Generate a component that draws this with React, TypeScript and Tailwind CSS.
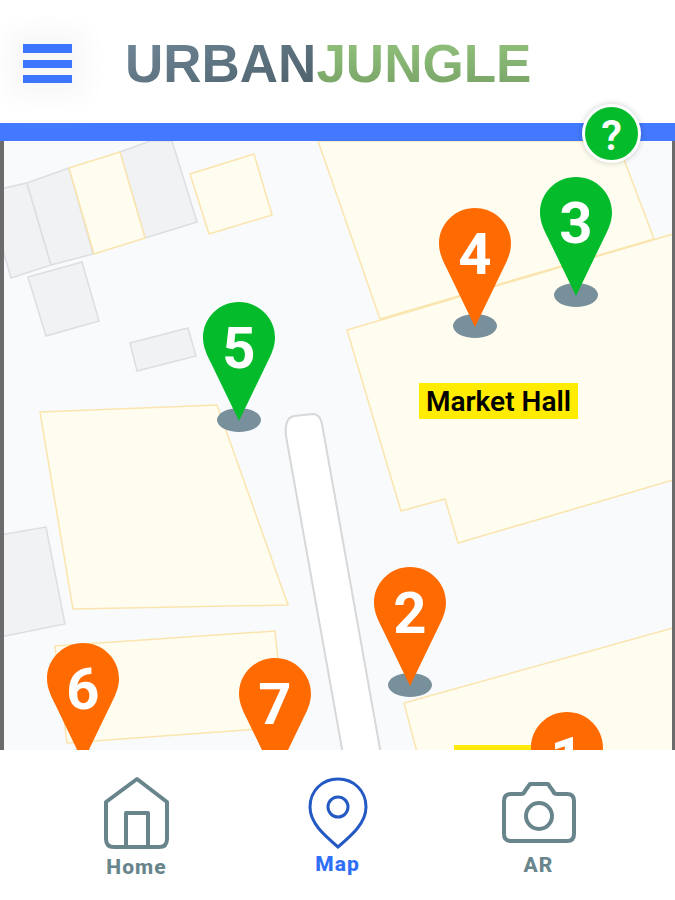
import type { ReactNode } from "react";

type Tone = "green" | "orange";

const pins: { id: number; x: number; y: number; tone: Tone }[] = [
  { id: 3, x: 572, y: 36, tone: "green" },
  { id: 4, x: 471, y: 67, tone: "orange" },
  { id: 5, x: 235, y: 161, tone: "green" },
  { id: 2, x: 406, y: 426, tone: "orange" },
  { id: 6, x: 79, y: 502, tone: "orange" },
  { id: 7, x: 271, y: 517, tone: "orange" },
  { id: 1, x: 563, y: 571, tone: "orange" },
];

function Pin({ id, x, y, tone }: { id: number; x: number; y: number; tone: Tone }) {
  return (
    <button
      type="button"
      aria-label={`Location ${id}`}
      className="absolute h-[132px] w-[72px] -translate-x-1/2 cursor-pointer"
      style={{ left: x, top: y }}
    >
      <svg className="absolute inset-0" width="72" height="132" viewBox="0 0 72 132" aria-hidden="true">
        <ellipse cx="36" cy="118" rx="22" ry="12" fill="#78909c" />
        <path
          d="M36 0C56 0 72 16 72 35.500C72 45 68 53 64 61L36 119L8 61C4 53 0 45 0 35.500C0 16 16 0 36 0Z"
          fill={tone === "green" ? "#04bb2c" : "#ff6b00"}
        />
      </svg>
      <span className="absolute inset-x-0 top-4 text-center text-[58px] leading-[60px] font-bold text-white">{id}</span>
    </button>
  );
}

function MapDrawing() {
  return (
    <svg className="absolute inset-0 h-full w-full" aria-hidden="true">
      <g transform="translate(-4 -141)" strokeWidth="1.5">
        <g fill="#f1f2f4" stroke="#dcdee2">
          <path d="M0 189L27 183L51 265L11 278L0 240Z" />
          <path d="M27 183L69 168L93 254L51 265Z" />
          <path d="M120 152L150 141L172 141L197 222L145 238Z" />
          <path d="M28 277L82 262L99 321L46 336Z" />
          <path d="M130 343L188 328L196 356L137 371Z" />
          <path d="M0 535L46 527L65 624L0 637Z" />
        </g>
        <g fill="#fffcf0" stroke="#fbe5ae">
          <path d="M69 168L120 152L145 238L94 254Z" />
          <path d="M190 174L254 154L272 215L209 234Z" />
          <path d="M318 141L380 319L654 239L617 141Z" />
          <path d="M347 330L680 232L680 478L458 543L445 499L401 511Z" />
          <path d="M40 412L217 405L288 605L73 609Z" />
          <path d="M55 646L275 631L285 727L67 743Z" />
          <path d="M404 703L680 626L680 760L419 760Z" />
        </g>
        <path
          d="M344 760L286 436Q284 418 294 416L313 414Q320 414 322 424L382 760"
          fill="#fff"
          stroke="#d6d8da"
          strokeWidth="2"
        />
      </g>
    </svg>
  );
}

function NavItem({ label, active, children }: { label: string; active?: boolean; children: ReactNode }) {
  return (
    <a
      href="#"
      aria-current={active ? "page" : undefined}
      className={`flex w-[100px] flex-col items-center text-[21px] leading-6 font-extrabold tracking-wider ${
        active ? "text-[#2f6ff6]" : "text-[#68858c]"
      }`}
    >
      {children}
      {label}
    </a>
  );
}

export default function App() {
  return (
    <div className="flex min-h-screen flex-col bg-white font-[Roboto,sans-serif]">
      <header className="relative flex h-[141px] items-start border-b-[18px] border-[#4379fe] px-[23px]">
        <button
          type="button"
          aria-label="Open menu"
          className="mt-[44px] flex w-[49px] flex-col gap-[7px] bg-[#f8f8f8] shadow-[0_0_28px_14px_#f7f7f7]"
        >
          <span className="h-[9px] w-full bg-[#3d76fd]" />
          <span className="h-[8px] w-full bg-[#3d76fd]" />
          <span className="h-[8px] w-full bg-[#3d76fd]" />
        </button>
        <h1 className="mt-[34px] ml-[53px] font-['Liberation_Sans',Arial,sans-serif] text-[53px] leading-[60px] font-bold">
          <span className="bg-linear-to-br from-[#72899a] to-[#4b5f69] bg-clip-text text-transparent">URBAN</span>
          <span className="bg-linear-to-b from-[#93c47d] to-[#77a266] bg-clip-text text-transparent">JUNGLE</span>
        </h1>
        <button
          type="button"
          aria-label="Help"
          className="absolute top-[104px] right-[34px] z-10 flex size-[59px] items-center justify-center rounded-full border-[3px] border-white bg-[#04bb2c] pt-1 text-[42px] leading-none font-semibold text-white shadow-[0_0_6px_#0003]"
        >
          ?
        </button>
      </header>

      <main className="relative flex-1 overflow-hidden border-r-[3px] border-l-4 border-[#6b6b6b] bg-[#f8fafc]">
        <MapDrawing />
        <div className="absolute top-[604px] left-[450px] h-9 w-[100px] bg-[#ffe80a]" />
        <div className="absolute top-[242px] left-[415px] h-9 bg-[#ffec00] px-[7px] text-[28px] leading-[38px] font-semibold text-black">
          Market Hall
        </div>
        {pins.map((pin) => (
          <Pin key={pin.id} {...pin} />
        ))}
      </main>

      <nav aria-label="Main" className="grid h-[150px] grid-cols-3 justify-items-center bg-white px-[36px] pt-[26px]">
        <NavItem label="Home">
          <svg className="mb-[3px] h-[76px] w-[68px]" viewBox="0 0 68 76" fill="none" stroke="#68858c" strokeWidth="4" strokeLinejoin="round" aria-hidden="true">
            <path d="M34 3L64 26V63Q64 71 56 71H11Q3 71 3 63V26Z" />
            <path d="M23 71V37H45V71" />
          </svg>
        </NavItem>
        <NavItem label="Map" active>
          <svg className="h-[76px] w-[62px]" viewBox="0 0 62 76" fill="none" stroke="#2459c4" strokeWidth="3" aria-hidden="true">
            <path d="M31 3C47 3 59 15 59 31C59 47 45 59 31 71C17 59 3 47 3 31C3 15 15 3 31 3Z" />
            <circle cx="31" cy="31" r="10" />
          </svg>
        </NavItem>
        <NavItem label="AR">
          <svg className="mb-px h-[76px] w-[74px]" viewBox="0 0 74 76" fill="none" stroke="#68858c" strokeWidth="4" strokeLinejoin="round" aria-hidden="true">
            <path d="M9 18H19Q22 18 23 15L28 8H46L51 15Q52 18 55 18H65Q72 18 72 25V58Q72 65 65 65H9Q2 65 2 58V25Q2 18 9 18Z" />
            <circle cx="37" cy="40" r="13" />
          </svg>
        </NavItem>
      </nav>
    </div>
  );
}
